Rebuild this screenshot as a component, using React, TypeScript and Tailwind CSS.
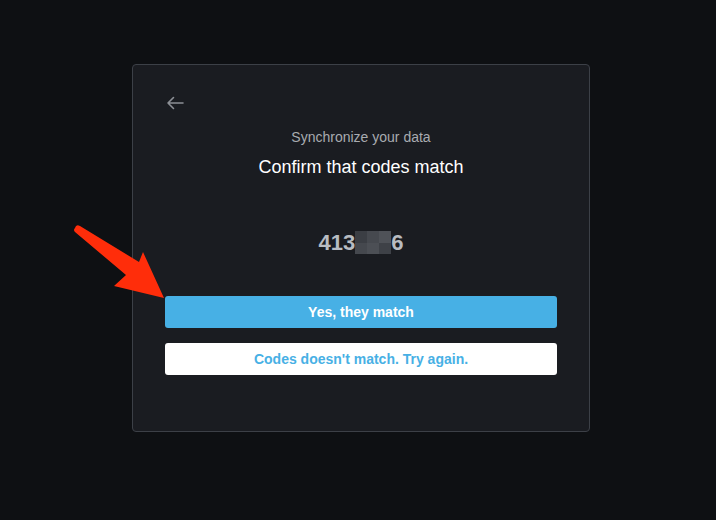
import React from "react";

export default function App() {
  return (
    <div
      className="relative w-[716px] h-[520px] bg-[#0e1013] flex justify-start pl-[132px] pt-[64px]"
      style={{ fontFamily: '"Liberation Sans", Arial, sans-serif' }}
    >
      <div className="w-[458px] h-[368px] bg-[#1a1c21] border border-[#3c4047] rounded-[4px] px-8 pt-[28px] flex flex-col">
        <div className="h-[20px] flex items-center">
          <svg width="20" height="20" viewBox="0 0 20 20" fill="none">
            <path d="M18 10H3M8.5 4.5L3 10l5.5 5.5" stroke="#8c8f95" strokeWidth="1.6" strokeLinecap="round" strokeLinejoin="round" />
          </svg>
        </div>
        <div className="mt-[16px] text-center text-[14px] leading-[16px] text-[#a8abb0]">Synchronize your data</div>
        <div className="mt-[12px] text-center text-[18px] leading-[21px] text-white">Confirm that codes match</div>
        <div className="mt-[53px] h-[24px] flex justify-center items-center text-[22px] leading-[24px] font-bold text-[#b8bcc2]">
          <span>413</span>
          <span className="grid grid-cols-3 grid-rows-2 w-[36px] h-[23px] -mt-px">
            <span className="bg-[#3b3e44]" />
            <span className="bg-[#46494f]" />
            <span className="bg-[#4f5258]" />
            <span className="bg-[#45484e]" />
            <span className="bg-[#4c4f55]" />
            <span className="bg-[#3e4147]" />
          </span>
          <span>6</span>
        </div>
        <button className="mt-[41px] h-[32px] w-full rounded-[3px] bg-[#47b0e5] text-white font-bold text-[14px]">
          Yes, they match
        </button>
        <button className="mt-[15px] h-[32px] w-full rounded-[3px] bg-white text-[#47b0e5] font-bold text-[14px]">
          Codes doesn't match. Try again.
        </button>
      </div>
      <svg className="absolute left-0 top-0 pointer-events-none" width="716" height="520" viewBox="0 0 716 520">
        <path
          d="M75 228 Q76 224 80 226 L139 262 L143 252 L164 298 L114 286 L126 275 L75 232 Q73 230 75 228 Z"
          fill="#ff2d0a"
        />
      </svg>
    </div>
  );
}
